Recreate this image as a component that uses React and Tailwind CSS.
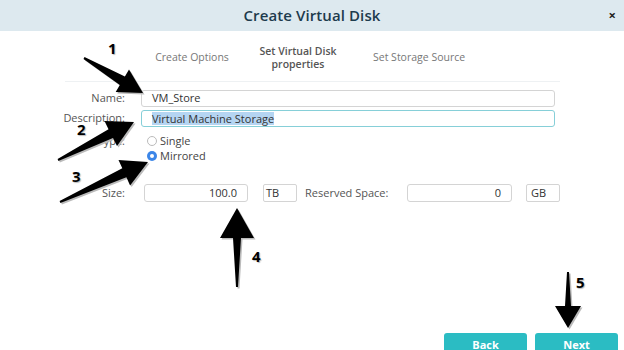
import React from "react";

function arrowPts(tx, ty, px, py, headLen, hw, sw, tw) {
  const dx = px - tx, dy = py - ty;
  const L = Math.hypot(dx, dy);
  const ux = dx / L, uy = dy / L;
  const nx = -uy, ny = ux;
  const bx = px - ux * headLen, by = py - uy * headLen;
  const pts = [
    [tx + nx * tw / 2, ty + ny * tw / 2],
    [bx + nx * sw / 2, by + ny * sw / 2],
    [bx + nx * hw / 2, by + ny * hw / 2],
    [px, py],
    [bx - nx * hw / 2, by - ny * hw / 2],
    [bx - nx * sw / 2, by - ny * sw / 2],
    [tx - nx * tw / 2, ty - ny * tw / 2],
  ];
  return pts.map((p) => p[0].toFixed(1) + "," + p[1].toFixed(1)).join(" ");
}

const arrows = [
  [84, 58, 143, 93, 24, 26, 10, 2],
  [58, 160, 134, 122, 26, 28, 10, 2],
  [60, 202, 148, 162, 26, 28, 10, 2],
  [237, 287, 237, 208, 30, 34, 8, 2],
  [568, 272, 568, 328, 22, 26, 6, 2],
];

function Num({ children, className }) {
  return (
    <div
      className={"absolute text-[15px] font-bold text-black leading-none " + className}
      style={{ textShadow: "1px 1px 1px #bbb" }}
    >
      {children}
    </div>
  );
}

export default function App() {
  return (
    <div className="relative w-[624px] h-[350px] overflow-hidden bg-white flex flex-col" style={{ fontFamily: "'Open Sans', 'Noto Sans', sans-serif" }}>
      <div className="h-[31px] bg-[#dde9ef] flex items-center justify-center relative shrink-0">
        <div className="text-[15px] font-semibold text-[#1d3b4d] tracking-[0.1px]">Create Virtual Disk</div>
        <div className="absolute right-[8px] top-[6px] text-[13px] font-bold text-[#222]">×</div>
      </div>

      <div className="flex items-center h-[50px] pt-[4px] pl-[155px] text-[10.5px] text-[#777] shrink-0">
        <div className="w-[74px] text-center">Create Options</div>
        <div className="w-[88px] ml-[25px] text-center leading-[13px] text-[#555] font-semibold">Set Virtual Disk<br />properties</div>
        <div className="ml-[31px]">Set Storage Source</div>
      </div>
      <div className="ml-[65px] w-[495px] h-px bg-[#eef1f3] shrink-0" />

      <div className="mt-[8px] flex flex-col text-[11px] text-[#555]">
        <div className="flex items-center h-[17px]">
          <div className="w-[125px] text-right">Name:</div>
          <div className="ml-[16px] w-[414px] h-[17px] border border-[#d4d4d4] rounded-[3px] flex items-center pl-[10px] text-[#333]">VM_Store</div>
        </div>
        <div className="flex items-center h-[17px] mt-[3px]">
          <div className="w-[125px] text-right">Description:</div>
          <div className="ml-[16px] w-[414px] h-[17px] border border-[#86cfd8] rounded-[3px] flex items-center pl-[10px] text-[#333]">
            <span className="bg-[#b5d5f2] leading-[13px]">Virtual Machine Storage</span>
          </div>
        </div>
        <div className="flex items-center h-[14px] mt-[7px]">
          <div className="w-[125px] text-right">Type:</div>
          <div className="ml-[22px] flex items-center gap-[3px]">
            <span className="w-[10px] h-[10px] rounded-full border border-[#bbb] bg-white" />
            <span className="text-[#444]">Single</span>
          </div>
        </div>
        <div className="flex items-center h-[14px] mt-[1px]">
          <div className="w-[125px]" />
          <div className="ml-[22px] flex items-center gap-[3px]">
            <span className="w-[10px] h-[10px] rounded-full bg-[#3c86e8] flex items-center justify-center">
              <span className="w-[4px] h-[4px] rounded-full bg-white" />
            </span>
            <span className="text-[#444]">Mirrored</span>
          </div>
        </div>
        <div className="flex items-center h-[18px] mt-[21px]">
          <div className="w-[125px] text-right">Size:</div>
          <div className="ml-[19px] w-[104px] h-[18px] border border-[#d4d4d4] rounded-[3px] flex items-center justify-end pr-[10px] text-[#333]">100.0</div>
          <div className="ml-[15px] w-[34px] h-[18px] border border-[#d4d4d4] rounded-[2px] flex items-center pl-[2px] text-[#333]">TB</div>
          <div className="ml-[8px] w-[102px]">Reserved Space:</div>
          <div className="w-[105px] h-[18px] border border-[#d4d4d4] rounded-[3px] flex items-center justify-end pr-[10px] text-[#333]">0</div>
          <div className="ml-[14px] w-[34px] h-[18px] border border-[#d4d4d4] rounded-[2px] flex items-center pl-[4px] text-[#333]">GB</div>
        </div>
      </div>

      <div className="flex-1" />
      <div className="flex justify-end gap-[8px] pr-[6px] shrink-0">
        <div className="w-[83px] h-[17px] bg-[#2bbcc3] rounded-t-[3px] flex items-start justify-center pt-[6px] text-[11px] font-bold text-white leading-none">Back</div>
        <div className="w-[83px] h-[17px] bg-[#2bbcc3] rounded-t-[3px] flex items-start justify-center pt-[6px] text-[11px] font-bold text-white leading-none">Next</div>
      </div>

      <svg className="absolute inset-0 pointer-events-none" width="624" height="350">
        {arrows.map((a, i) => (
          <polygon key={"s" + i} points={arrowPts(a[0] + 1.5, a[1] + 1.5, a[2] + 1.5, a[3] + 1.5, a[4], a[5], a[6], a[7])} fill="#bbb" />
        ))}
        {arrows.map((a, i) => (
          <polygon key={i} points={arrowPts(...a)} fill="#000" />
        ))}
      </svg>
      <Num className="left-[108px] top-[41px]">1</Num>
      <Num className="left-[77px] top-[122px]">2</Num>
      <Num className="left-[72px] top-[169px]">3</Num>
      <Num className="left-[252px] top-[249px]">4</Num>
      <Num className="left-[576px] top-[275px]">5</Num>
    </div>
  );
}
